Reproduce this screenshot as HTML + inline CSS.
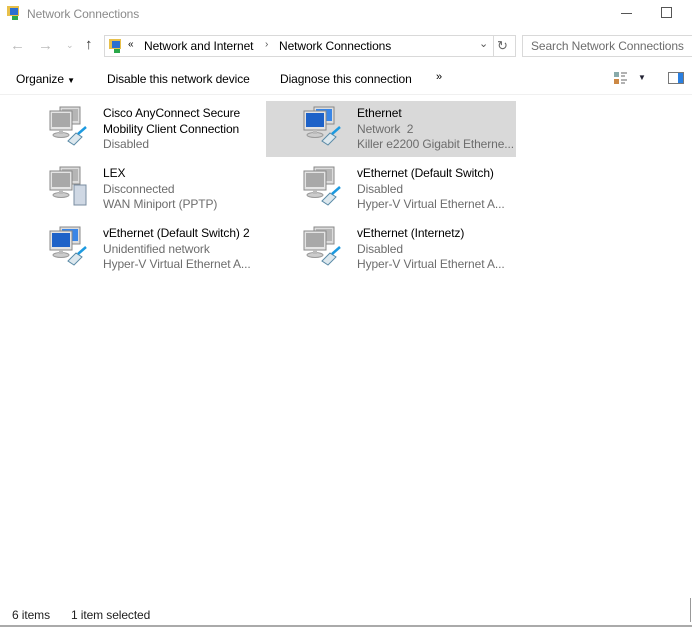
<!DOCTYPE html>
<html><head><meta charset="utf-8"><style>
*{margin:0;padding:0;box-sizing:border-box}
body{width:692px;height:627px;background:#fff;font-family:"Liberation Sans",sans-serif;font-size:12px;color:#000;position:relative;overflow:hidden;letter-spacing:-0.1px}
.a{position:absolute;white-space:nowrap}
.g{color:#6d6d6d}
.it{position:absolute;width:250px;height:56px}
.it svg{position:absolute;left:2px;top:2px}
.it .t{position:absolute;left:37px;top:5px;line-height:15.5px;white-space:nowrap}
</style></head><body>
<svg class="a" style="left:6px;top:5px" width="16" height="16"><rect x="1" y="1" width="12" height="10" fill="#e8c04a"/><rect x="4" y="3" width="8" height="7" fill="#2b6fd0"/><rect x="6" y="11" width="6" height="4" fill="#2aa84a"/></svg>
<div class="a" style="left:27px;top:7px;color:#8a8a8a">Network Connections</div>
<div class="a" style="left:621px;top:13px;width:11px;height:1px;background:#555"></div>
<div class="a" style="left:661px;top:7px;width:11px;height:11px;border:1px solid #555"></div>
<div class="a" style="left:10px;top:37px;color:#bbb;font-size:15px">←</div>
<div class="a" style="left:38px;top:37px;color:#bbb;font-size:15px">→</div>
<div class="a" style="left:66px;top:40px;color:#bbb;font-size:9px">⌄</div>
<div class="a" style="left:85px;top:36px;color:#333;font-size:15px">↑</div>
<div class="a" style="left:104px;top:35px;width:412px;height:22px;border:1px solid #d9d9d9"></div>
<div class="a" style="left:493px;top:35px;width:1px;height:22px;background:#d9d9d9"></div>
<svg class="a" style="left:108px;top:38px" width="16" height="16"><rect x="1" y="1" width="12" height="10" fill="#e8c04a"/><rect x="4" y="3" width="8" height="7" fill="#2b6fd0"/><rect x="6" y="11" width="6" height="4" fill="#2aa84a"/></svg>
<div class="a" style="left:128px;top:39px;font-size:10px">«</div>
<div class="a" style="left:144px;top:39px">Network and Internet</div>
<div class="a" style="left:265px;top:39px;font-size:10px;color:#555">›</div>
<div class="a" style="left:279px;top:39px">Network Connections</div>
<div class="a" style="left:479px;top:37px;color:#555;font-size:11px">⌄</div>
<div class="a" style="left:497px;top:38px;color:#666;font-size:13px">↻</div>
<div class="a" style="left:522px;top:35px;width:175px;height:22px;border:1px solid #d9d9d9"></div>
<div class="a" style="left:531px;top:39px;color:#6d6d6d">Search Network Connections</div>
<div class="a" style="left:16px;top:72px">Organize <span style="font-size:8px">▼</span></div>
<div class="a" style="left:107px;top:72px">Disable this network device</div>
<div class="a" style="left:280px;top:72px">Diagnose this connection</div>
<div class="a" style="left:436px;top:71px;font-size:11px">»</div>
<svg class="a" style="left:614px;top:72px" width="14" height="13"><rect x="0" y="0" width="5" height="5" fill="#8aa"/><rect x="0" y="7" width="5" height="5" fill="#c84"/><path d="M7 1h6M7 4h4M7 8h6M7 11h4" stroke="#666"/></svg>
<div class="a" style="left:638px;top:73px;font-size:8px;color:#223">▼</div>
<svg class="a" style="left:668px;top:72px" width="17" height="13"><rect x="0.5" y="0.5" width="15" height="11" fill="#fff" stroke="#777"/><rect x="10" y="1" width="5" height="10" fill="#2a7fe0"/></svg>
<div class="a" style="left:0;top:94px;width:692px;height:1px;background:#f0f0f0"></div>

<svg width="0" height="0" style="position:absolute"><defs>
<g id="mg"><rect x="12" y="4" width="20" height="17" fill="#ddd" stroke="#888"/><rect x="14" y="6" width="16" height="12" fill="#b5b5b5"/><rect x="2" y="8" width="22" height="19" fill="#e4e4e4" stroke="#888"/><rect x="4" y="10" width="18" height="14" fill="#a8a8a8"/><ellipse cx="13" cy="32" rx="8" ry="2.5" fill="#ccc" stroke="#999"/><rect x="11" y="27" width="4" height="4" fill="#bbb"/></g>
<g id="mb"><rect x="12" y="4" width="20" height="17" fill="#ddd" stroke="#888"/><rect x="14" y="6" width="16" height="12" fill="#3a86e6"/><rect x="2" y="8" width="22" height="19" fill="#e4e4e4" stroke="#888"/><rect x="4" y="10" width="18" height="14" fill="#1e62c8"/><ellipse cx="13" cy="32" rx="8" ry="2.5" fill="#ccc" stroke="#999"/><rect x="11" y="27" width="4" height="4" fill="#bbb"/></g>
<g id="pl"><path d="M20 38 l8 -8 6 4 -8 8z" fill="#dde8ee" stroke="#5a8aa6"/><path d="M30 31 l8 -7" stroke="#1d9ae0" stroke-width="2.5"/></g>
</defs></svg>

<div class="it" style="left:46px;top:101px"><svg width="42" height="44"><use href="#mg"/><use href="#pl"/></svg><div class="t" style="left:57px">Cisco AnyConnect Secure<br>Mobility Client Connection<br><span class="g">Disabled</span></div></div>
<div class="it" style="left:266px;top:101px;background:#d9d9d9"><svg width="42" height="44" style="left:36px"><use href="#mb"/><use href="#pl"/></svg><div class="t" style="left:91px">Ethernet<br><span class="g">Network&nbsp; 2<br>Killer e2200 Gigabit Etherne...</span></div></div>
<div class="it" style="left:46px;top:161px"><svg width="42" height="44"><use href="#mg"/><rect x="26" y="22" width="12" height="20" fill="#cfd8e4" stroke="#7a8ca0"/></svg><div class="t" style="left:57px">LEX<br><span class="g">Disconnected<br>WAN Miniport (PPTP)</span></div></div>
<div class="it" style="left:266px;top:161px"><svg width="42" height="44" style="left:36px"><use href="#mg"/><use href="#pl"/></svg><div class="t" style="left:91px">vEthernet (Default Switch)<br><span class="g">Disabled<br>Hyper-V Virtual Ethernet A...</span></div></div>
<div class="it" style="left:46px;top:221px"><svg width="42" height="44"><use href="#mb"/><use href="#pl"/></svg><div class="t" style="left:57px">vEthernet (Default Switch) 2<br><span class="g">Unidentified network<br>Hyper-V Virtual Ethernet A...</span></div></div>
<div class="it" style="left:266px;top:221px"><svg width="42" height="44" style="left:36px"><use href="#mg"/><use href="#pl"/></svg><div class="t" style="left:91px">vEthernet (Internetz)<br><span class="g">Disabled<br>Hyper-V Virtual Ethernet A...</span></div></div>

<div class="a" style="left:12px;top:608px;color:#1e1e1e">6 items</div>
<div class="a" style="left:71px;top:608px;color:#1e1e1e">1 item selected</div>
<div class="a" style="left:690px;top:598px;width:1px;height:24px;background:#999"></div>
<div class="a" style="left:0;top:625px;width:692px;height:2px;background:#aaa"></div>
</body></html>
